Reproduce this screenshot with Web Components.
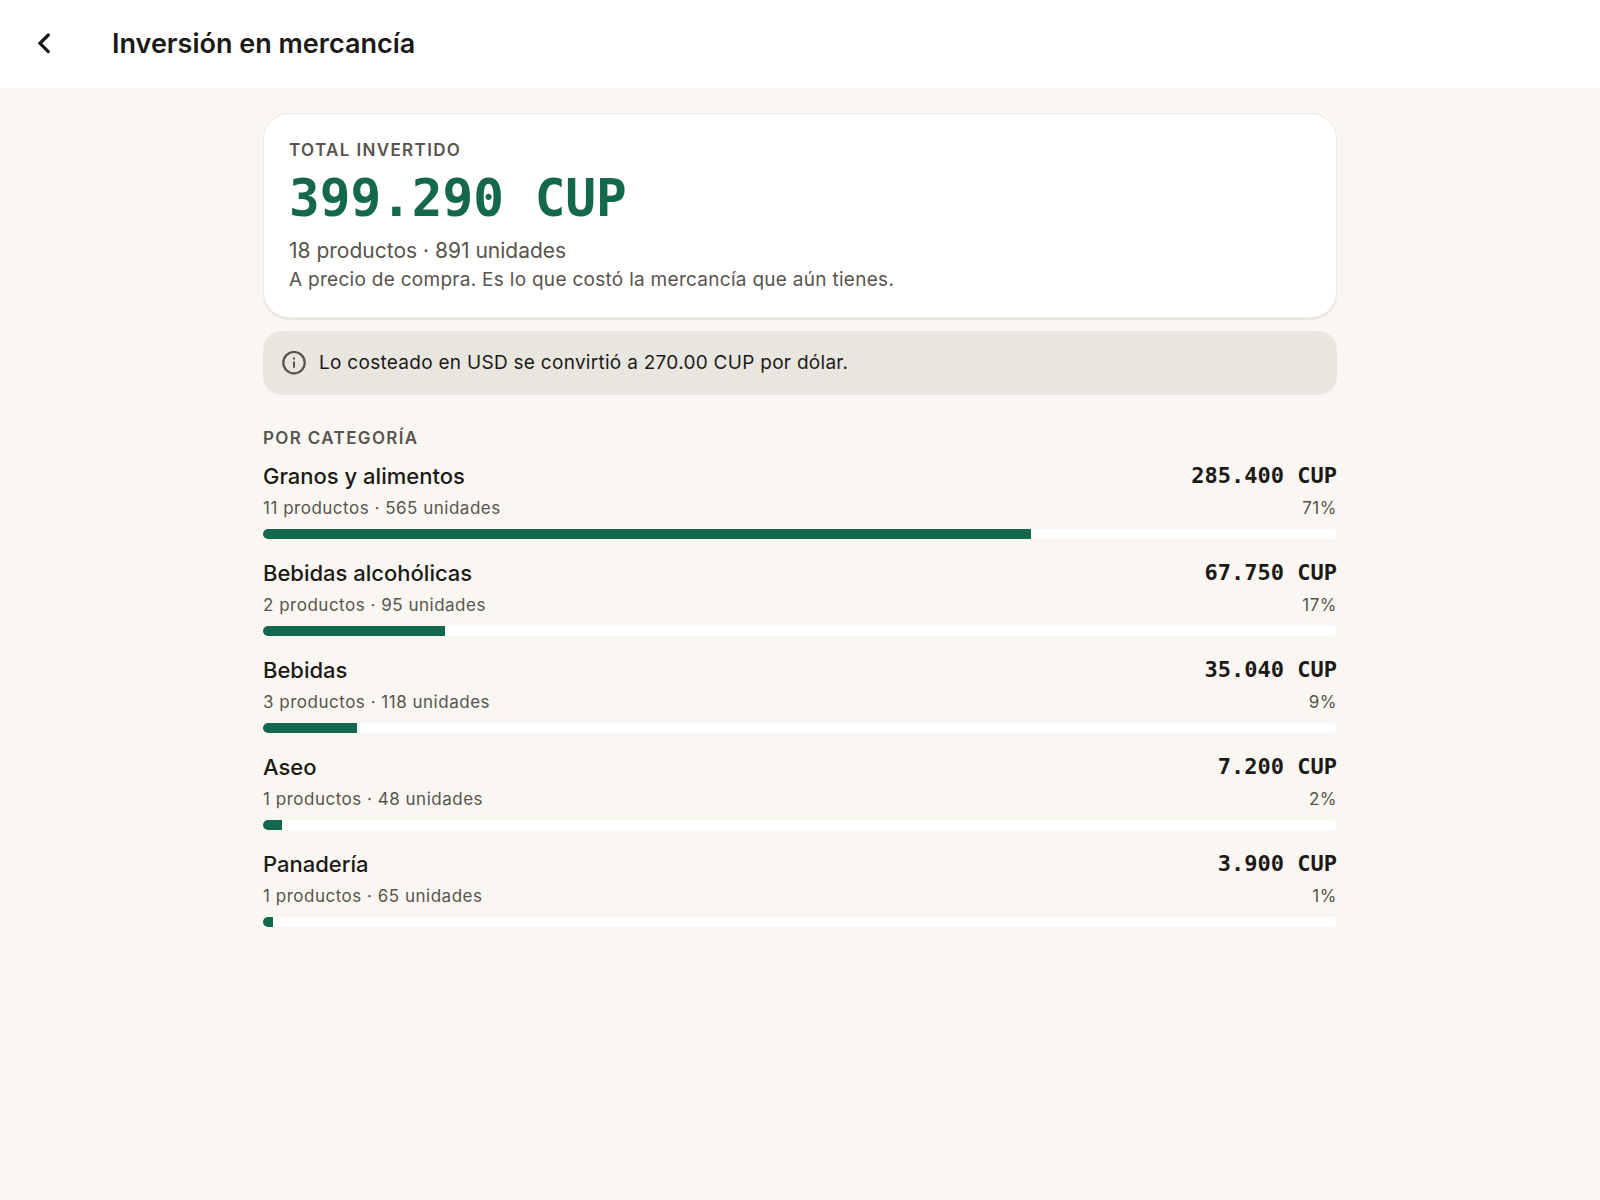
<!DOCTYPE html>
<html lang="es">
<head>
<meta charset="utf-8">
<meta name="viewport" content="width=device-width, initial-scale=1">
<title>Inversión en mercancía</title>
<style>
  :root {
    --ink: #1b1a17;
    --muted: #57544e;
    --brand: #14684d;
    --paper: #faf7f2;
    --surface: #ffffff;
    --note: #e9e6e0;
    --line: #eeebe5;
    --mono: "DejaVu Sans Mono", "Liberation Mono", monospace;
  }
  body {
    margin: 0;
    min-height: 100vh;
    background: var(--paper);
    color: var(--ink);
    font-family: Inter, "Noto Sans", sans-serif;
  }
</style>
</head>
<body>
<investment-page></investment-page>

<script>
class AppHeader extends HTMLElement {
  constructor() {
    super();
    this.attachShadow({ mode: "open" }).innerHTML = `
      <style>
        :host { display: block; background: var(--surface); }
        header { display: flex; align-items: center; gap: 36px; height: 88px; padding: 0 12px; }
        button {
          display: grid; place-items: center; width: 64px; height: 64px; padding: 0;
          border: 0; border-radius: 50%; background: none; color: inherit; cursor: pointer;
        }
        h1 { margin: 0; font-size: 27px; line-height: 36px; font-weight: 600; }
      </style>
      <header>
        <button type="button" aria-label="Volver">
          <svg width="24" height="24" viewBox="0 0 24 24" fill="none" stroke="currentColor"
            stroke-width="3.3" stroke-linecap="round" stroke-linejoin="miter" aria-hidden="true">
            <path d="M16.300 3 8 11.300l8.300 8.300"/>
          </svg>
        </button>
        <h1><slot></slot></h1>
      </header>`;
  }
}
customElements.define("app-header", AppHeader);

class SectionLabel extends HTMLElement {
  constructor() {
    super();
    this.attachShadow({ mode: "open" }).innerHTML = `
      <style>
        :host { display: block; color: var(--muted); }
        h2 { margin: 0; font-size: 17px; line-height: 22px; font-weight: 600; letter-spacing: 0.08em; text-transform: uppercase; }
      </style>
      <h2><slot></slot></h2>`;
  }
}
customElements.define("section-label", SectionLabel);

class TotalCard extends HTMLElement {
  constructor() {
    super();
    this.attachShadow({ mode: "open" }).innerHTML = `
      <style>
        :host {
          display: block; padding: 25px 25px 22px; border: 1px solid var(--line); border-radius: 26px;
          background: var(--surface); box-shadow: 0 2px 1px #e9e6df; color: var(--muted);
        }
        p { margin: 0; }
        .amount { margin: 6px 0; font: 700 51px/64px var(--mono); color: var(--brand); }
        .count { font-size: 21px; line-height: 28px; }
        .hint { font-size: 19px; line-height: 30px; letter-spacing: 0.015em; }
      </style>
      <section-label><slot name="label"></slot></section-label>
      <p class="amount"><slot name="amount"></slot></p>
      <p class="count"><slot name="count"></slot></p>
      <p class="hint"><slot></slot></p>`;
  }
}
customElements.define("total-card", TotalCard);

class InfoNote extends HTMLElement {
  constructor() {
    super();
    this.attachShadow({ mode: "open" }).innerHTML = `
      <style>
        :host {
          display: flex; align-items: center; gap: 13px; padding: 18px 19px;
          border-radius: 19px; background: var(--note);
        }
        svg { flex: none; color: var(--muted); }
        p { margin: 0; font-size: 19px; line-height: 28px; letter-spacing: 0.015em; }
      </style>
      <svg width="24" height="24" viewBox="0 0 24 24" fill="none" stroke="currentColor" stroke-width="2.200" aria-hidden="true">
        <circle cx="12" cy="11.700" r="10.700"/>
        <path d="M12 10.600v6.200M12 6.400v2" stroke-width="2"/>
      </svg>
      <p><slot></slot></p>`;
  }
}
customElements.define("info-note", InfoNote);

class CategoryRow extends HTMLElement {
  constructor() {
    super();
    this.attachShadow({ mode: "open" }).innerHTML = `
      <style>
        :host { display: block; }
        .line { display: flex; justify-content: space-between; gap: 16px; line-height: 32px; }
        .name { font-size: 22px; font-weight: 500; }
        .amount { font-family: var(--mono); font-size: 22px; font-weight: 700; }
        .detail { font-size: 17px; letter-spacing: 0.03em; color: var(--muted); }
        .track { height: 10px; margin-top: 5px; border-radius: 5px; background: var(--surface); overflow: hidden; }
        .fill { height: 100%; background: var(--brand); }
      </style>
      <div class="line">
        <span class="name"><slot></slot></span>
        <span class="amount"><slot name="amount"></slot></span>
      </div>
      <div class="line detail">
        <span><slot name="detail"></slot></span>
        <span><slot name="share"></slot></span>
      </div>
      <div class="track"><div class="fill"></div></div>`;
  }
  connectedCallback() {
    const share = 100 * Number(this.getAttribute("value")) / Number(this.getAttribute("total"));
    this.shadowRoot.querySelector(".fill").style.width = share + "%";
  }
}
customElements.define("category-row", CategoryRow);

class InvestmentPage extends HTMLElement {
  constructor() {
    super();
    const total = 399290;
    const rows = [
      ["Granos y alimentos", "285.400", "11 productos · 565 unidades", "71%"],
      ["Bebidas alcohólicas", "67.750", "2 productos · 95 unidades", "17%"],
      ["Bebidas", "35.040", "3 productos · 118 unidades", "9%"],
      ["Aseo", "7.200", "1 productos · 48 unidades", "2%"],
      ["Panadería", "3.900", "1 productos · 65 unidades", "1%"]
    ];
    this.attachShadow({ mode: "open" }).innerHTML = `
      <style>
        :host { display: block; }
        main { max-width: 1074px; margin: 0 auto; padding: 25px 24px; }
        info-note { margin-top: 13px; }
        .heading { margin: 32px 0 11px; }
        .rows { display: flex; flex-direction: column; gap: 18px; }
      </style>
      <app-header>Inversión en mercancía</app-header>
      <main>
        <total-card>
          <span slot="label">Total invertido</span>
          <span slot="amount">399.290 CUP</span>
          <span slot="count">18 productos · 891 unidades</span>
          A precio de compra. Es lo que costó la mercancía que aún tienes.
        </total-card>
        <info-note>Lo costeado en USD se convirtió a 270.00 CUP por dólar.</info-note>
        <section-label class="heading">Por categoría</section-label>
        <div class="rows">${rows.map(([name, amount, detail, share]) => `
          <category-row value="${amount.replace(".", "")}" total="${total}">${name}
            <span slot="amount">${amount} CUP</span>
            <span slot="detail">${detail}</span>
            <span slot="share">${share}</span>
          </category-row>`).join("")}
        </div>
      </main>`;
  }
}
customElements.define("investment-page", InvestmentPage);
</script>
</body>
</html>
